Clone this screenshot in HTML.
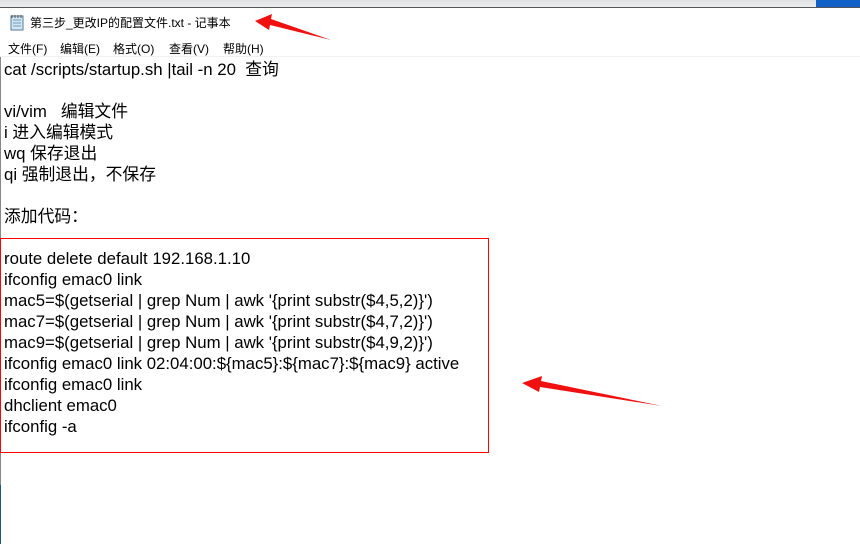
<!DOCTYPE html>
<html><head><meta charset="utf-8"><style>
body{margin:0;width:860px;height:544px;overflow:hidden;background:#fff;position:relative;font-family:"Liberation Sans","Noto Sans CJK SC",sans-serif}
.top{position:absolute;left:0;top:0;width:860px;height:7px;background:linear-gradient(#e0e1e3,#eceded);border-bottom:1px solid #555}
.blue{position:absolute;left:816px;top:0;width:44px;height:7px;background:#1060c8}
.title{position:absolute;left:30px;top:14px;font-size:12px;color:#000}
.menu{position:absolute;left:8px;top:40px;font-size:12px;color:#000}
.menu span{position:absolute;white-space:nowrap}
.sep{position:absolute;left:0;top:56px;width:860px;height:1px;background:#f0f0f0}
.text{position:absolute;left:4px;top:59px;font-size:16.8px;line-height:21px;color:#000;white-space:pre}
.box{position:absolute;left:0;top:238px;width:487px;height:213px;border:1px solid #f00}
.lb{position:absolute;left:0;top:57px;width:1px;height:428px;background:#888}
.lb2{position:absolute;left:0;top:485px;width:1px;height:59px;background:#1a5a70}
</style></head><body>
<div class="top"></div><div class="blue"></div>
<svg style="position:absolute;left:10px;top:14px" width="14" height="17"><rect x="1" y="2" width="12" height="14" fill="#cfe6f5" stroke="#5a7a95"/><path d="M3 6h8M3 9h8M3 12h8" stroke="#7a9ab5"/><path d="M2 1v3M5 1v3M8 1v3M11 1v3" stroke="#555"/></svg>
<div class="title">第三步_更改IP的配置文件.txt - 记事本</div>
<div class="menu"><span style="left:0">文件(F)</span><span style="left:52px">编辑(E)</span><span style="left:105px">格式(O)</span><span style="left:161px">查看(V)</span><span style="left:215px">帮助(H)</span></div>
<div class="sep"></div>
<div class="lb"></div><div class="lb2"></div>
<div class="text">cat /scripts/startup.sh |tail -n 20  查询

vi/vim   编辑文件
i 进入编辑模式
wq 保存退出
qi 强制退出，不保存

添加代码：

route delete default 192.168.1.10
ifconfig emac0 link
mac5=$(getserial | grep Num | awk '{print substr($4,5,2)}')
mac7=$(getserial | grep Num | awk '{print substr($4,7,2)}')
mac9=$(getserial | grep Num | awk '{print substr($4,9,2)}')
ifconfig emac0 link 02:04:00:${mac5}:${mac7}:${mac9} active
ifconfig emac0 link
dhclient emac0
ifconfig -a</div>
<div class="box"></div>
<svg style="position:absolute;left:0;top:0" width="860" height="544">
<path d="M255 21 L272 14 L271 19 L331 40 L270 25 L269 30 Z" fill="#f01010"/>
<path d="M522 383 L542 376 L541 381 L662 406 L540 387 L539 392 Z" fill="#f01010"/>
</svg>
</body></html>
